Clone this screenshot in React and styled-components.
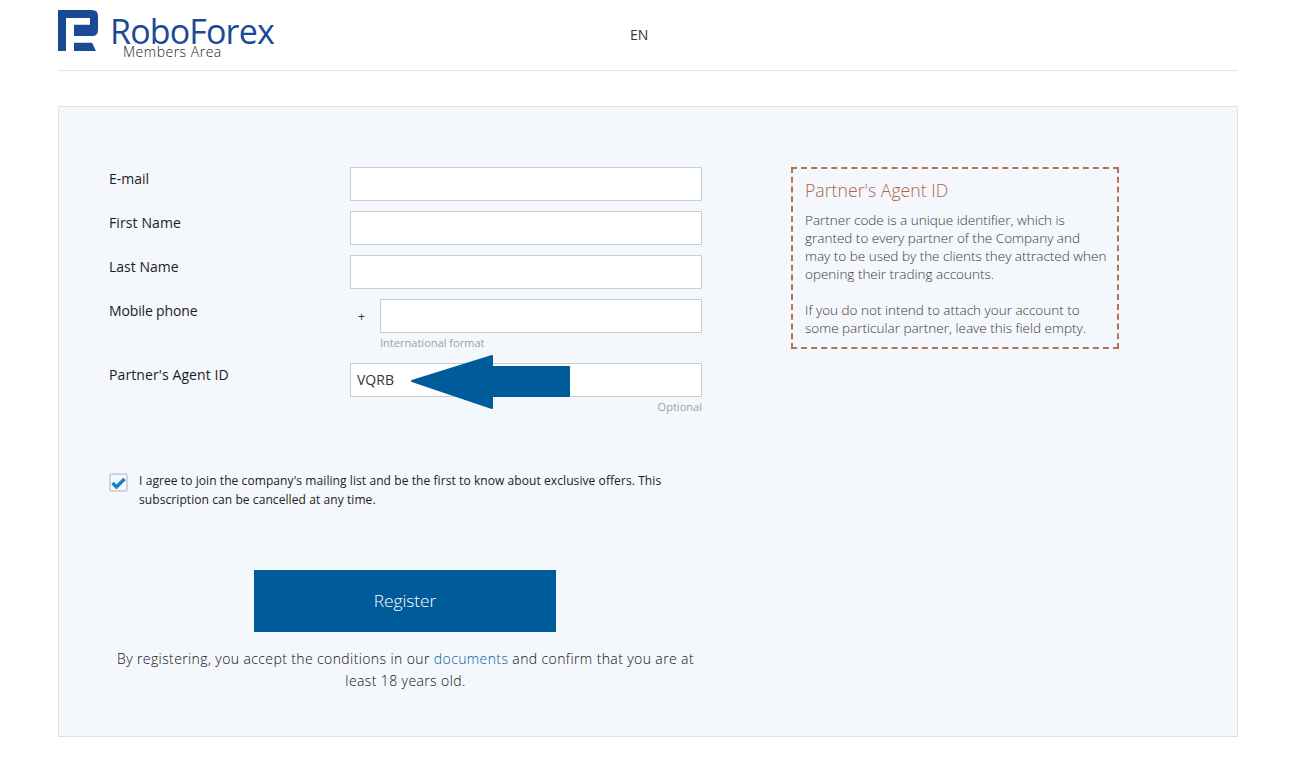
import React from "react";
import styled, { createGlobalStyle } from "styled-components";

const Global = createGlobalStyle`
  html, body { margin: 0; padding: 0; background: #fff; }
  body { font-family: "Open Sans", "Liberation Sans", sans-serif; color: #222; }
`;

const Page = styled.div`
  width: 1180px;
  margin-left: 58px;
`;

const Header = styled.header`
  height: 70px;
  border-bottom: 1px solid #dde6e9;
  display: grid;
  grid-template-columns: 572px auto;
  margin-bottom: 35px;
`;

const Brand = styled.div`
  padding-top: 10px;
  display: flex;
  flex-direction: column;
`;

const BrandRow = styled.div`
  display: flex;
  align-items: flex-start;
  height: 34px;
`;

const Wordmark = styled.span`
  font-size: 34px;
  line-height: 36px;
  height: 34px;
  margin-left: 12px;
  margin-top: 3px;
  color: #1b4a94;
  letter-spacing: -0.85px;
  white-space: nowrap;
`;

const Sub = styled.span`
  margin: 0 0 0 65px;
  font-size: 14px;
  line-height: 15px;
  font-weight: 300;
  letter-spacing: 0.5px;
  color: #222;
`;

const Lang = styled.div`
  font-size: 14px;
  font-weight: 400;
  line-height: 18px;
  padding-top: 26px;
  color: #333;
`;

const Panel = styled.main`
  box-sizing: border-box;
  height: 631px;
  background: #f4f7fb;
  border: 1px solid #dbe5e8;
  padding: 60px 0 0 50px;
  display: flex;
  align-items: flex-start;
`;

const FormCol = styled.div`
  width: 593px;
  flex: none;
`;

const Row = styled.div`
  display: grid;
  grid-template-columns: 241px 352px;
  margin-bottom: ${(p) => p.$gap ?? 10}px;
`;

const Label = styled.label`
  font-size: 14px;
  line-height: 24px;
  letter-spacing: ${(p) => p.$spacing ?? 0}px;
  color: #1c1c1c;
`;

const Field = styled.div`
  position: relative;
  display: flex;
  flex-wrap: wrap;
  align-items: center;
`;

const Input = styled.div`
  box-sizing: border-box;
  height: 34px;
  flex: 1;
  background: #fff;
  border: 1px solid #c5ced3;
  padding-left: 6px;
  font-size: 14px;
  line-height: 32px;
  color: #333;
`;

const Plus = styled.span`
  width: 30px;
  padding-left: 8px;
  box-sizing: border-box;
  font-size: 12px;
  color: #333;
`;

const Hint = styled.div`
  flex: 0 0 100%;
  box-sizing: border-box;
  font-size: 11px;
  line-height: 20px;
  font-weight: 400;
  letter-spacing: 0.02px;
  color: #97a3ab;
  padding-left: ${(p) => p.$left ?? 0}px;
  text-align: ${(p) => p.$align ?? "left"};
`;

const Arrow = styled.svg`
  position: absolute;
  left: 60px;
  top: -9px;
`;

const Consent = styled.div`
  display: flex;
  gap: 11px;
  margin-top: 54px;
  width: 553px;
  font-size: 12px;
  line-height: 19px;
  letter-spacing: 0.08px;
  color: #222;
`;

const Check = styled.span`
  box-sizing: border-box;
  flex: none;
  width: 19px;
  height: 19px;
  margin-top: 2px;
  border: 2px solid #cdd3df;
  border-radius: 3px;
  background: #f4f7fb;
  display: flex;
  align-items: center;
  justify-content: center;
`;

const Register = styled.button`
  display: block;
  width: 302px;
  height: 62px;
  margin: 61px 0 0 145px;
  padding: 0 0 2px;
  border: 0;
  background: #005b9b;
  color: #fff;
  font-family: inherit;
  font-size: 17.3px;
  font-weight: 300;
`;

const Terms = styled.p`
  margin: 16px 0 0;
  text-align: center;
  font-size: 14px;
  line-height: 22px;
  font-weight: 300;
  letter-spacing: 0.39px;
  color: #111;
`;

const DocLink = styled.a`
  color: #005f9f;
`;

const Note = styled.aside`
  box-sizing: border-box;
  width: 328px;
  height: 182px;
  margin-left: 89px;
  border: 2px dashed #b5725a;
  padding: 9px 10px 9px 12px;
`;

const NoteTitle = styled.h3`
  margin: 0 0 9px;
  font-size: 17.7px;
  line-height: 24px;
  font-weight: 300;
  color: #b0654f;
`;

const NoteText = styled.p`
  margin: 0 0 18px;
  font-size: 13.5px;
  line-height: 18px;
  font-weight: 300;
  color: #3a3a3a;
`;

export default function App() {
  return (
    <Page>
      <Global />
      <Header>
        <Brand>
          <BrandRow>
            <svg width="40" height="42" viewBox="0 0 40 42">
              <path fill="#1b4a94" d="M0 0H34Q40 0 40 6V20Q40 26 34 26H16V14.7H32V8H8V41H0Z" />
              <path fill="#1b4a94" d="M16 32.7H34L38 41H16Z" />
            </svg>
            <Wordmark>RoboForex</Wordmark>
          </BrandRow>
          <Sub>Members Area</Sub>
        </Brand>
        <Lang>EN</Lang>
      </Header>
      <Panel>
        <FormCol>
          <Row>
            <Label>E-mail</Label>
            <Field><Input /></Field>
          </Row>
          <Row>
            <Label $spacing={0.1}>First Name</Label>
            <Field><Input /></Field>
          </Row>
          <Row>
            <Label>Last Name</Label>
            <Field><Input /></Field>
          </Row>
          <Row>
            <Label $spacing={-0.15}>Mobile phone</Label>
            <Field>
              <Plus>+</Plus>
              <Input />
              <Hint $left={30}>International format</Hint>
            </Field>
          </Row>
          <Row $gap={0}>
            <Label $spacing={0.1}>Partner's Agent ID</Label>
            <Field>
              <Input>VQRB</Input>
              <Arrow width="162" height="56" viewBox="0 0 162 56">
                <path fill="#005b9b" stroke="#005b9b" strokeWidth="2" strokeLinejoin="round" d="M2 27 82 2V13H159V42H82V54Z" />
              </Arrow>
              <Hint $align="right">Optional</Hint>
            </Field>
          </Row>
          <Consent>
            <Check>
              <svg width="15" height="12" viewBox="0 0 15 12">
                <path fill="none" stroke="#1a7fc9" strokeWidth="3.4" d="M1.5 6 5.5 10 13.5 2" />
              </svg>
            </Check>
            <span>
              I agree to join the company's mailing list and be the first to know about exclusive offers. This subscription can be cancelled at any time.
            </span>
          </Consent>
          <Register>Register</Register>
          <Terms>
            By registering, you accept the conditions in our <DocLink>documents</DocLink> and confirm that you are at least 18 years old.
          </Terms>
        </FormCol>
        <Note>
          <NoteTitle>Partner's Agent ID</NoteTitle>
          <NoteText>Partner code is a unique identifier, which is granted to every partner of the Company and may to be used by the clients they attracted when opening their trading accounts.</NoteText>
          <NoteText>If you do not intend to attach your account to some particular partner, leave this field empty.</NoteText>
        </Note>
      </Panel>
    </Page>
  );
}
